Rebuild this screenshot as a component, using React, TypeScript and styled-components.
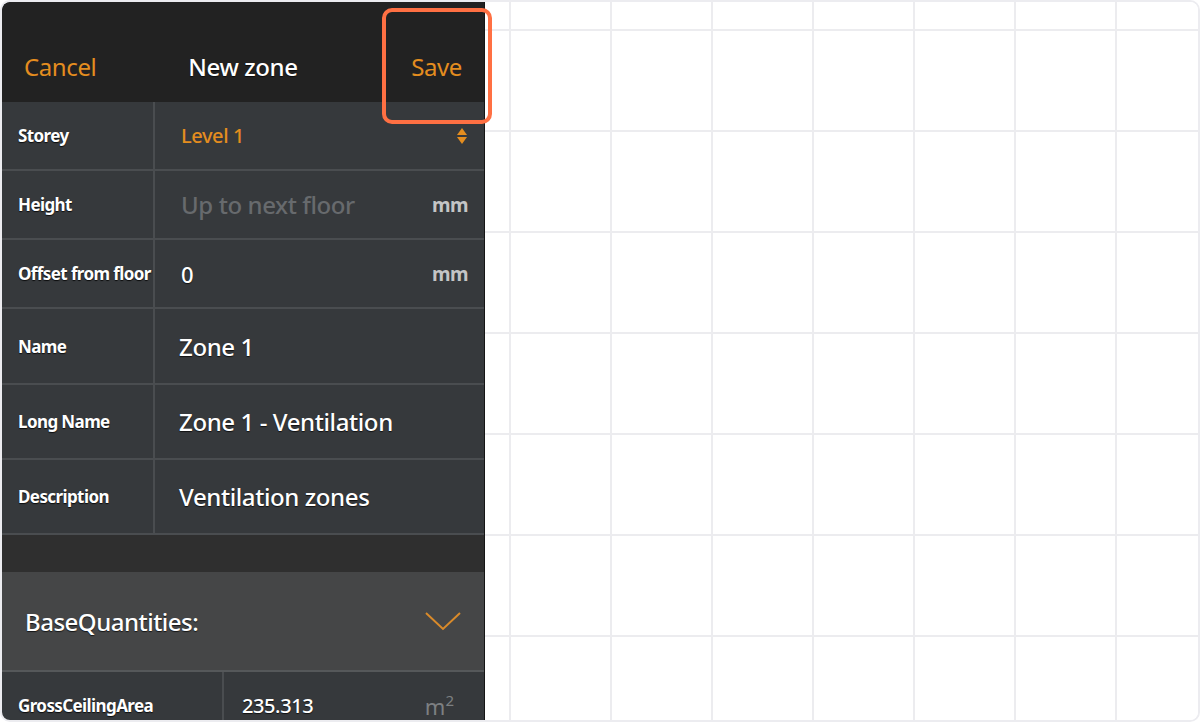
import React from "react";
import styled, { createGlobalStyle } from "styled-components";

const Global = createGlobalStyle`
  html, body { margin: 0; padding: 0; background: #ffffff; }
  body { font-family: "Noto Sans", "Open Sans", sans-serif; }
  * { box-sizing: border-box; }
`;

const Frame = styled.div`
  position: relative;
  width: 1200px;
  height: 722px;
  border: 2px solid #ececf0;
  border-radius: 10px;
  overflow: hidden;
  display: flex;
  background: #ffffff;
`;

const Panel = styled.div`
  width: 483px;
  flex: 0 0 483px;
  display: flex;
  flex-direction: column;
  background: #36393c;
  border-right: 1px solid #151515;
  border-top-left-radius: 8px;
  overflow: hidden;
`;

const Canvas = styled.div`
  flex: 1;
  background-color: #ffffff;
  background-image:
    linear-gradient(to right, #ececef 2px, transparent 2px),
    linear-gradient(to bottom, #ececef 2px, transparent 2px);
  background-size: 101px 101px;
  background-position: 24px 27px;
`;

const Header = styled.div`
  height: 100px;
  flex: 0 0 100px;
  background: #222222;
  display: grid;
  grid-template-columns: 1fr auto 1fr;
  align-items: center;
  padding: 28px 22px 0 22px;
  font-size: 24px;
`;

const HeaderAction = styled.span<{ $align: "left" | "right" }>`
  color: #e48d1f;
  justify-self: ${(p) => (p.$align === "left" ? "start" : "end")};
  letter-spacing: -0.4px;
`;

const Title = styled.span`
  color: #ffffff;
  font-weight: 500;
  letter-spacing: -0.4px;
  text-shadow: 0 1px 1px rgba(0, 0, 0, 0.7);
`;

const Row = styled.div<{ $h: number; $label?: number }>`
  height: ${(p) => p.$h}px;
  flex: 0 0 ${(p) => p.$h}px;
  display: grid;
  grid-template-columns: ${(p) => p.$label ?? 153}px 1fr;
  border-bottom: 2px solid #4a4d50;
`;

const Label = styled.div`
  display: flex;
  align-items: center;
  padding-left: 16px;
  border-right: 2px solid #4a4d50;
  color: #ffffff;
  font-weight: 700;
  font-size: 17px;
  letter-spacing: -0.6px;
  white-space: nowrap;
  overflow: hidden;
  text-shadow: 0 1px 1px rgba(0, 0, 0, 0.8);
`;

const Field = styled.div<{ $pad?: number }>`
  display: flex;
  align-items: center;
  justify-content: space-between;
  padding: 0 16px 0 ${(p) => p.$pad ?? 24}px;
`;

const Value = styled.span<{ $tone?: "white" | "orange" | "muted"; $size?: number }>`
  font-size: ${(p) => p.$size ?? 24}px;
  font-weight: 500;
  letter-spacing: -0.4px;
  color: ${(p) =>
    p.$tone === "orange" ? "#e48d1f" : p.$tone === "muted" ? "#676a6d" : "#ffffff"};
  text-shadow: ${(p) => (p.$tone === "white" || !p.$tone ? "0 1px 1px rgba(0,0,0,0.7)" : "none")};
`;

const Unit = styled.span`
  color: #c4c5c6;
  font-weight: 700;
  font-size: 19px;
  letter-spacing: -0.5px;
`;

const Gap = styled.div`
  height: 37px;
  flex: 0 0 37px;
  background: #2f2f2f;
`;

const Section = styled.div`
  height: 100px;
  flex: 0 0 100px;
  background: #454647;
  border-bottom: 2px solid #55585a;
  display: flex;
  align-items: center;
  justify-content: space-between;
  padding: 0 22px 0 23px;
  color: #ffffff;
  font-size: 24px;
  font-weight: 500;
  letter-spacing: -0.5px;
  text-shadow: 0 1px 1px rgba(0, 0, 0, 0.7);
`;

const Area = styled.span`
  color: #7d8082;
  font-size: 22px;
  line-height: 1;
  margin-right: 14px;
  sup { font-size: 15px; line-height: 1; vertical-align: 9px; }
`;

const Highlight = styled.div`
  position: absolute;
  left: 380px;
  top: 6px;
  width: 110px;
  height: 116px;
  border: 4px solid #ff7043;
  border-radius: 10px;
  pointer-events: none;
`;

const Spinner = () => (
  <svg width="12" height="20" viewBox="0 0 12 20">
    <path d="M6 2 L11 9 L1 9 Z" fill="#e48d1f" />
    <path d="M1 11 L11 11 L6 18 Z" fill="#e48d1f" />
  </svg>
);

const Chevron = () => (
  <svg width="38" height="22" viewBox="0 0 38 22">
    <path d="M2 3 L19 19 L36 3" fill="none" stroke="#d98a2a" strokeWidth="2" />
  </svg>
);

export default function App() {
  return (
    <>
      <Global />
      <Frame>
        <Panel>
          <Header>
            <HeaderAction $align="left">Cancel</HeaderAction>
            <Title>New zone</Title>
            <HeaderAction $align="right">Save</HeaderAction>
          </Header>
          <Row $h={69}>
            <Label>Storey</Label>
            <Field $pad={26}>
              <Value $tone="orange" $size={20}>Level 1</Value>
              <Spinner />
            </Field>
          </Row>
          <Row $h={69}>
            <Label>Height</Label>
            <Field $pad={26}>
              <Value $tone="muted" $size={24}>Up to next floor</Value>
              <Unit>mm</Unit>
            </Field>
          </Row>
          <Row $h={69}>
            <Label>Offset from floor</Label>
            <Field $pad={26}>
              <Value $size={22}>0</Value>
              <Unit>mm</Unit>
            </Field>
          </Row>
          <Row $h={76}>
            <Label>Name</Label>
            <Field>
              <Value>Zone 1</Value>
            </Field>
          </Row>
          <Row $h={75}>
            <Label>Long Name</Label>
            <Field>
              <Value>Zone 1 - Ventilation</Value>
            </Field>
          </Row>
          <Row $h={75}>
            <Label>Description</Label>
            <Field>
              <Value>Ventilation zones</Value>
            </Field>
          </Row>
          <Gap />
          <Section>
            <span>BaseQuantities:</span>
            <Chevron />
          </Section>
          <Row $h={68} $label={222}>
            <Label>GrossCeilingArea</Label>
            <Field $pad={18}>
              <Value $size={20}>235.313</Value>
              <Area>
                m<sup>2</sup>
              </Area>
            </Field>
          </Row>
        </Panel>
        <Canvas />
        <Highlight />
      </Frame>
    </>
  );
}
